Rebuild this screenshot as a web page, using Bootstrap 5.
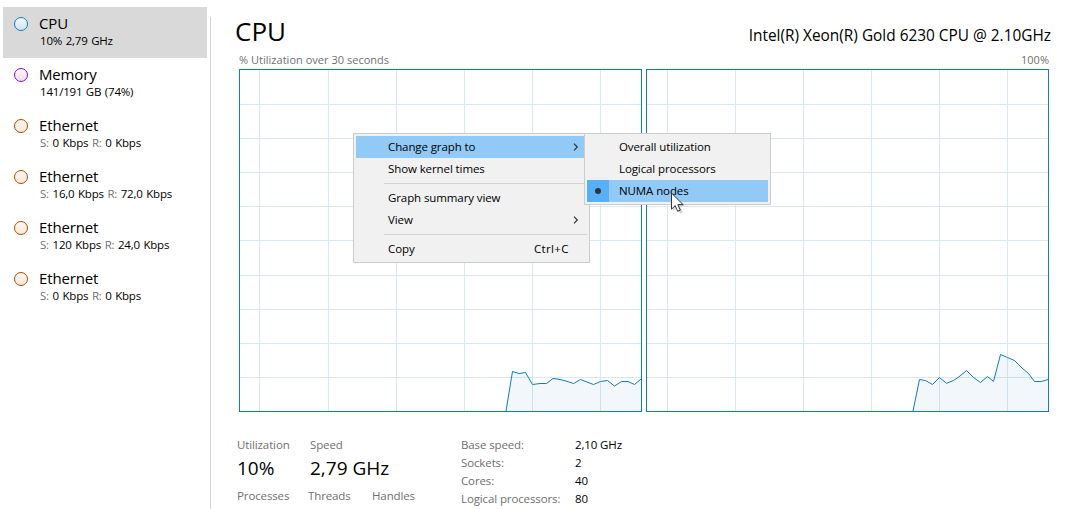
<!DOCTYPE html>
<html lang="en">
<head>
    <meta charset="UTF-8">
    <meta name="viewport" content="width=device-width, initial-scale=1.0">
    <title>Performance</title>
    <link href="https://cdn.jsdelivr.net/npm/bootstrap@5.3.0/dist/css/bootstrap.min.css" rel="stylesheet">
    <style>
        body {
            font-family: "Open Sans", "Noto Sans", sans-serif;
            font-size: 11.5px;
            line-height: 18px;
            color: #000;
            background: #fff;
            height: 509px;
            overflow: hidden;
            white-space: nowrap;
            cursor: default;
        }
        /* Left list of resources */
        .sidebar {
            width: 207px;
            padding: 7px 0 0 3px;
        }
        .resource {
            height: 51px;
            padding: 6px 0 0 11px;
            gap: 11px;
        }
        .resource.selected {
            background: #d9d9d9;
        }
        .ring {
            width: 14px;
            height: 14px;
            margin-top: 4px;
            border: 1.300px solid;
            border-radius: 50%;
        }
        .ring-cpu { border-color: #117dbb; background: linear-gradient(#f4f9fd, #cfe3f1); }
        .ring-mem { border-color: #8b12ae; background: linear-gradient(#fcf7fd, #efdcf4); }
        .ring-net { border-color: #a74f01; background: linear-gradient(#fff8f3, #fbe6d8); }
        .res-name {
            font-size: 15px;
            line-height: 20px;
            letter-spacing: -0.15px;
        }
        .res-info {
            line-height: 16px;
            padding-left: 1px;
            letter-spacing: -0.2px;
            word-spacing: 0.8px;
        }
        .dim { color: #707070; }
        .divider {
            width: 1px;
            margin: 17px 0 0 3px;
            background: #d5d5d5;
        }
        /* Right side */
        .details {
            padding: 14px 17px 0 28px;
        }
        .title-row {
            height: 34px;
            margin: 0 -2px 0 -4px;
        }
        .title-row h1 {
            font-size: 26px;
            line-height: 34px;
            font-weight: 400;
        }
        .model {
            font-size: 15.4px;
        }
        .caption {
            font-size: 11px;
            line-height: 16px;
            margin: 4px 0 1px 0;
            letter-spacing: 0.02px;
        }
        .graphs {
            gap: 4px;
            height: 343px;
        }
        .graphs svg { display: block; }
        .stats { padding: 24px 0 0 0; letter-spacing: -0.12px; }
        .stat-left { width: 224px; margin-left: -2px; }
        .stat-big {
            font-size: 19px;
            line-height: 26px;
            margin: 1px 0 6px;
            letter-spacing: 0;
        }
        .stat-keys { width: 114px; }
        /* Context menus */
        .ctx {
            position: absolute;
            top: 133px;
            padding: 2px;
            border: 1px solid #ccc;
            background: #f1f1f1;
            letter-spacing: -0.1px;
        }
        .ctx-main { left: 353px; width: 237px; }
        .ctx-sub { left: 584px; width: 187px; }
        .ctx-item {
            height: 22px;
            line-height: 22px;
        }
        .ctx-item.hot { background: #91c9f7; }
        .ctx-gutter { width: 32px; height: 22px; }
        .ctx-check {
            width: 22px;
            height: 22px;
            background: #56b0fa;
        }
        .ctx-check::after {
            content: "";
            width: 6px;
            height: 6px;
            border-radius: 50%;
            background: #333;
        }
        .ctx-key { width: 53px; letter-spacing: 0.35px; }
        .ctx-arrow { margin-right: 8px; }
        .ctx-line {
            height: 1px;
            margin: 3px 0 3px 28px;
            background: #d4d4d4;
        }
        .pointer {
            position: absolute;
            left: 671px;
            top: 192px;
        }
    </style>
</head>
<body>

<div class="d-flex h-100">
    <div class="sidebar flex-shrink-0" id="resources"></div>
    <div class="divider flex-shrink-0"></div>

    <main class="details flex-grow-1">
        <div class="title-row d-flex justify-content-between align-items-baseline">
            <h1 class="m-0">CPU</h1>
            <div class="model">Intel(R) Xeon(R) Gold 6230 CPU @ 2.10GHz</div>
        </div>
        <div class="caption dim d-flex justify-content-between">
            <span>% Utilization over 30 seconds</span>
            <span>100%</span>
        </div>
        <div class="graphs d-flex" id="graphs"></div>

        <div class="stats d-flex">
            <div class="stat-left">
                <div class="d-flex">
                    <div style="width: 73px"><div class="dim">Utilization</div><div class="stat-big">10%</div></div>
                    <div><div class="dim">Speed</div><div class="stat-big">2,79 GHz</div></div>
                </div>
                <div class="d-flex dim">
                    <div style="width: 71px">Processes</div>
                    <div style="width: 64px">Threads</div>
                    <div>Handles</div>
                </div>
            </div>
            <div class="stat-keys dim">
                <div>Base speed:</div>
                <div>Sockets:</div>
                <div>Cores:</div>
                <div>Logical processors:</div>
            </div>
            <div>
                <div>2,10 GHz</div>
                <div>2</div>
                <div>40</div>
                <div>80</div>
            </div>
        </div>
    </main>
</div>

<!-- Graph context menu -->
<div class="ctx ctx-main">
    <div class="ctx-item hot d-flex align-items-center">
        <div class="ctx-gutter"></div><div class="flex-grow-1">Change graph to</div>
        <svg class="ctx-arrow" width="6" height="8" viewBox="0 0 6 8"><path d="M1 .7 4.3 4 1 7.3" fill="none" stroke="#333" stroke-width="1.2"/></svg>
    </div>
    <div class="ctx-item d-flex"><div class="ctx-gutter"></div>Show kernel times</div>
    <div class="ctx-line"></div>
    <div class="ctx-item d-flex"><div class="ctx-gutter"></div>Graph summary view</div>
    <div class="ctx-item d-flex align-items-center">
        <div class="ctx-gutter"></div><div class="flex-grow-1">View</div>
        <svg class="ctx-arrow" width="6" height="8" viewBox="0 0 6 8"><path d="M1 .7 4.3 4 1 7.3" fill="none" stroke="#333" stroke-width="1.2"/></svg>
    </div>
    <div class="ctx-line"></div>
    <div class="ctx-item d-flex">
        <div class="ctx-gutter"></div><div class="flex-grow-1">Copy</div><div class="ctx-key">Ctrl+C</div>
    </div>
</div>

<div class="ctx ctx-sub">
    <div class="ctx-item d-flex"><div class="ctx-gutter"></div>Overall utilization</div>
    <div class="ctx-item d-flex"><div class="ctx-gutter"></div>Logical processors</div>
    <div class="ctx-item hot d-flex">
        <div class="ctx-gutter"><div class="ctx-check d-flex align-items-center justify-content-center"></div></div>NUMA nodes
    </div>
</div>

<svg class="pointer" width="16" height="24" viewBox="0 0 16 24">
    <path d="M2 3v16l4-3.600 3 6 3-1.500-3-5.600h5z" fill="#000" opacity=".18"/>
    <path d="M.5 1v16.200l3.700-3.600 2.500 5.700 2.600-1.200-2.500-5.500h5.200z" fill="#fff" stroke="#333" stroke-width="1"/>
</svg>

<script src="https://cdn.jsdelivr.net/npm/bootstrap@5.3.0/dist/js/bootstrap.bundle.min.js"></script>
<script>
    const net = (s, r) => `<span class="dim">S:</span> ${s} Kbps <span class="dim">R:</span> ${r} Kbps`;
    const resources = [
        { name: 'CPU', ring: 'cpu', info: '10% 2,79 GHz', selected: true },
        { name: 'Memory', ring: 'mem', info: '141/191 GB (74%)' },
        { name: 'Ethernet', ring: 'net', info: net('0', '0') },
        { name: 'Ethernet', ring: 'net', info: net('16,0', '72,0') },
        { name: 'Ethernet', ring: 'net', info: net('120', '24,0') },
        { name: 'Ethernet', ring: 'net', info: net('0', '0') }
    ];
    document.getElementById('resources').innerHTML = resources.map(r => `
        <div class="resource d-flex align-items-start ${r.selected ? 'selected' : ''}">
            <div class="ring ring-${r.ring}"></div>
            <div>
                <div class="res-name">${r.name}</div>
                <div class="res-info">${r.info}</div>
            </div>
        </div>`).join('');

    // One graph per NUMA node, 403x343 with a 1px frame
    const nodes = [
        {
            cols: [20, 89, 157, 225, 293, 361],
            line: '267,342 273.5,302.5 280,304.5 286.5,303.5 293.5,315.5 301,314.5 307.5,314.5 314,309.5 320,310.3 327,312 334.5,314.5 341.5,310.5 348,313 354.5,315.5 361.5,312.5 368.5,311.5 375.5,317 382.5,312.5 389,312.5 395.5,315.5 402,310'
        },
        {
            cols: [21, 89, 157, 225, 293, 361],
            line: '267,342 273.5,310.5 279.5,311.5 286.5,315.5 293.5,308.5 300.5,314.3 307.5,311.5 314,307 320.5,301.5 327.5,308.5 334.5,313.5 341.5,307.5 347.5,312.5 354.5,285.5 361.5,288.5 368.5,291.5 376,299 382.5,304.5 388.5,312.5 395.5,312.5 402,310.5'
        }
    ];
    const rows = [35, 69, 103, 137, 171, 206, 240, 274, 308];
    document.getElementById('graphs').innerHTML = nodes.map(n => `
        <svg width="403" height="343" viewBox="0 0 403 343">
            <g stroke="#d9e9f3">
                ${rows.map(y => `<path d="M1 ${y + 0.5}H402"/>`).join('')}
                ${n.cols.map(x => `<path d="M${x + 0.5} 1V342"/>`).join('')}
            </g>
            <polygon points="${n.line} 402,342" fill="#117dbb" fill-opacity=".06"/>
            <polyline points="${n.line}" fill="none" stroke="#117dbb"/>
            <rect x=".5" y=".5" width="402" height="342" fill="none" stroke="#117dbb"/>
        </svg>`).join('');
</script>

</body>
</html>
